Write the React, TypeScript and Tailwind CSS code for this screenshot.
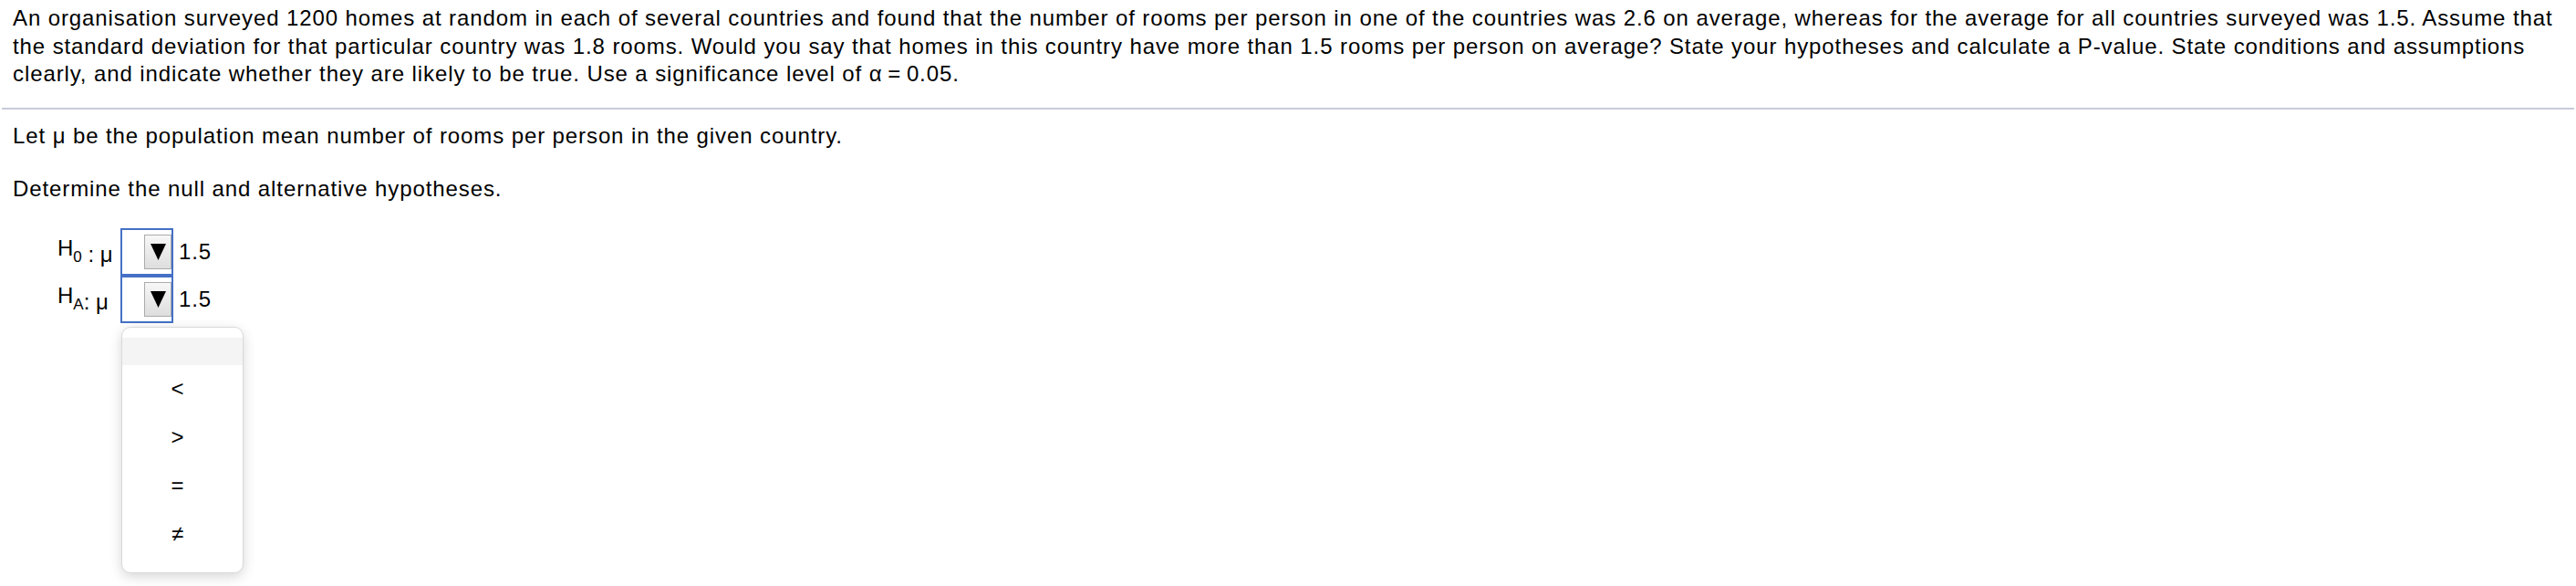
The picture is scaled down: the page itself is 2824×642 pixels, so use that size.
import React from "react";

function Caret() {
  return (
    <span className="flex h-[38px] w-[30px] items-center justify-center border border-[#ababab] bg-gradient-to-b from-[#f7f7f7] to-[#dedede]">
      <svg width="17" height="18" viewBox="0 0 17 18">
        <polygon points="0,0 17,0 8.5,18" fill="#000" />
      </svg>
    </span>
  );
}

function SelectBox() {
  return (
    <span className="flex h-[52px] w-[58px] items-center justify-end border-2 border-[#4570c6] bg-white">
      <Caret />
    </span>
  );
}

export default function App() {
  return (
    <div
      className="relative h-[642px] w-full overflow-hidden bg-white text-[24px] tracking-[0.9px] text-black"
      style={{ fontFamily: '"Liberation Sans", Arial, Helvetica, sans-serif' }}
    >
      <div className="flex flex-col px-[14px] pt-[5px] leading-[30.5px]">
        <span className="whitespace-nowrap">
          An organisation surveyed 1200 homes at random in each of several countries and found that the number of rooms per
          person in one of the countries was 2.6 on average, whereas for the average for all countries surveyed was 1.5.
          Assume that
        </span>
        <span className="whitespace-nowrap">
          the standard deviation for that particular country was 1.8 rooms. Would you say that homes in this country have
          more than 1.5 rooms per person on average? State your hypotheses and calculate a P-value. State conditions and
          assumptions
        </span>
        <span className="whitespace-nowrap">
          clearly, and indicate whether they are likely to be true. Use a significance level of α{"\u2009"}={"\u2009"}0.05.
        </span>
      </div>
      <div className="mx-[2px] mt-[21px] h-[2px] bg-[#c9ccd9]" />
      <p className="mt-[14px] px-[14px] leading-[30px]">Let μ be the population mean number of rooms per person in the given country.</p>
      <p className="mt-[28px] px-[14px] leading-[30px]">Determine the null and alternative hypotheses.</p>

      <div className="mt-[28px] flex flex-col pl-[63px]">
        <div className="flex h-[52px] items-center">
          <span className="w-[69px] whitespace-nowrap tracking-normal">
            <span className="align-[7px]">H</span>
            <span className="text-[17px]">0</span> : μ
          </span>
          <SelectBox />
          <span className="ml-[6px]">1.5</span>
        </div>
        <div className="relative flex h-[52px] items-center">
          <span className="w-[69px] whitespace-nowrap tracking-normal">
            <span className="align-[7px]">H</span>
            <span className="text-[17px]">A</span>: μ
          </span>
          <span className="relative">
            <SelectBox />
            <div className="absolute left-[1px] top-[56px] z-10 w-[134px] rounded-[10px] border-[1.5px] border-[#d9d9d9] bg-white pb-[15px] pt-[11px] shadow-[0_4px_14px_rgba(0,0,0,0.16)]">
              <div className="h-[30px] bg-[#f4f4f4]" />
              {["<", ">", "=", "≠"].map((s) => (
                <div key={s} className="flex h-[53px] items-center justify-center pr-[10px]">
                  {s}
                </div>
              ))}
            </div>
          </span>
          <span className="ml-[6px]">1.5</span>
        </div>
      </div>
    </div>
  );
}
